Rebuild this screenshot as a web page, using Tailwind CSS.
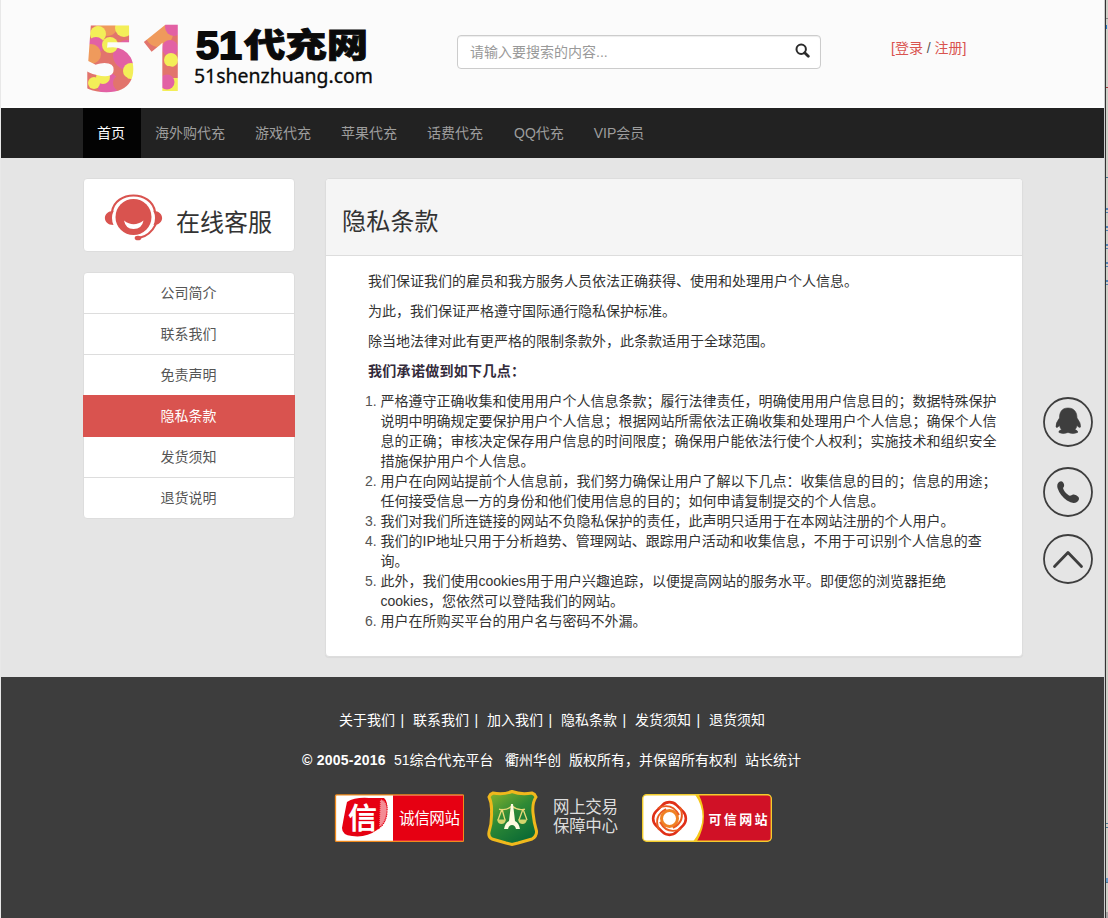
<!DOCTYPE html>
<html lang="zh-CN">
<head>
<meta charset="utf-8">
<title>隐私条款 - 51代充网</title>
<script src="https://cdn.jsdelivr.net/npm/@tailwindcss/browser@4"></script>
</head>
<body class="flex h-[918px] w-[1108px] overflow-hidden bg-[#d0d0c8] font-['Liberation_Sans','Noto_Sans_CJK_SC',sans-serif] text-sm leading-5 text-[#333]">
<div class="flex h-[918px] w-[1104px] flex-col border-l border-[#e8e8e8] bg-[#e5e5e5]">

  <header class="flex h-[108px] shrink-0 border-b-2 border-[#fefefe] bg-[#fbfbfb]">
    <svg class="ml-[74px] h-[106px] w-[310px] shrink-0 overflow-visible" viewBox="75 0 310 106">
      <defs>
        <pattern id="dots" x="75" y="0" width="310" height="110" patternUnits="userSpaceOnUse" viewBox="75 0 310 110">
          <rect x="75" y="0" width="310" height="110" fill="#e2746c"/>
          <circle cx="107" cy="25" r="11" fill="#ef9a5c"/>
          <circle cx="124" cy="28" r="9" fill="#f3ee58"/>
          <circle cx="98" cy="34" r="8" fill="#f3ee58"/>
          <circle cx="96" cy="45" r="8" fill="#e261a4"/>
          <circle cx="91" cy="54" r="10" fill="#ef9a5c"/>
          <circle cx="128" cy="55" r="15" fill="#e261a4"/>
          <circle cx="110" cy="45" r="8" fill="#f3ee58"/>
          <circle cx="131" cy="71" r="8" fill="#f3ee58"/>
          <circle cx="108" cy="84" r="11" fill="#e261a4"/>
          <circle cx="103" cy="77" r="7" fill="#f3ee58"/>
          <circle cx="94" cy="83" r="6" fill="#f3ee58"/>
          <circle cx="121" cy="83" r="8" fill="#e2746c"/>
          <circle cx="159" cy="33" r="14" fill="#ef9a5c"/>
          <circle cx="174" cy="27" r="9" fill="#e261a4"/>
          <circle cx="170" cy="48" r="8" fill="#e261a4"/>
          <circle cx="171" cy="60" r="7" fill="#f3ee58"/>
          <circle cx="169" cy="72" r="6" fill="#e2746c"/>
          <rect x="160" y="78" width="22" height="20" fill="#f3ee58"/>
          <circle cx="167" cy="82" r="7.500" fill="#e261a4"/>
        </pattern>
      </defs>
      <text x="84.500" y="90" font-family="Open Sans" font-weight="800" font-size="88" fill="url(#dots)" stroke="url(#dots)" stroke-width="2.500">5</text>
      <text x="140" y="90" font-family="Open Sans" font-weight="700" font-size="89" fill="url(#dots)" stroke="url(#dots)" stroke-width="2">1</text>
      <text x="196" y="58.500" font-family="Liberation Sans" font-weight="700" font-size="38" fill="#0a0a0a" stroke="#0a0a0a" stroke-width="1.800" textLength="46" lengthAdjust="spacingAndGlyphs">51</text>
      <text x="244" y="57" font-family="Noto Sans CJK SC" font-weight="900" font-size="33" fill="#0a0a0a" stroke="#0a0a0a" stroke-width=".8" textLength="124" lengthAdjust="spacingAndGlyphs">代充网</text>
      <text x="194" y="83" font-family="Noto Sans" font-size="20.500" fill="#0a0a0a" stroke="#0a0a0a" stroke-width=".3" textLength="179" lengthAdjust="spacingAndGlyphs">51shenzhuang.com</text>
    </svg>
    <div class="ml-[72px] mt-[35px] flex h-[34px] w-[364px] shrink-0 items-center justify-between rounded border border-[#ccc] bg-white pl-3 pr-[10px] text-[#999] shadow-[inset_0_1px_1px_rgba(0,0,0,0.075)]">
      <span>请输入要搜索的内容...</span>
      <svg class="mb-1 h-[15px] w-[15px]" viewBox="0 0 15 15" fill="none" stroke="#2b2b2b"><circle cx="6.200" cy="6.200" r="4.700" stroke-width="2"/><path d="M9.700 9.700L13.300 13.300" stroke-width="2.800" stroke-linecap="round"/></svg>
    </div>
    <div class="ml-[70px] mt-[38px] whitespace-nowrap text-[#d9534f]">[登录 <span class="text-[#555]">/</span> 注册]</div>
  </header>

  <nav class="flex h-[50px] shrink-0 bg-[#222] pl-[82px] leading-[50px] text-[#9d9d9d]">
    <a class="bg-[#030303] pl-[14px] pr-[16px] text-white">首页</a>
    <a class="pl-[14px] pr-[16px]">海外购代充</a>
    <a class="pl-[14px] pr-[16px]">游戏代充</a>
    <a class="pl-[14px] pr-[16px]">苹果代充</a>
    <a class="pl-[14px] pr-[16px]">话费代充</a>
    <a class="px-[15px]">QQ代充</a>
    <a class="px-[15px]">VIP会员</a>
  </nav>

  <main class="flex h-[519px] shrink-0 pl-[82px] pt-[20px]">
    <aside class="w-[212px] shrink-0">
      <div class="flex h-[74px] rounded border border-[#ddd] bg-white">
        <svg class="ml-[20px] mt-[14px] h-[50px] w-[60px] shrink-0" viewBox="104 193 60 50">
          <circle cx="133.500" cy="217" r="18" fill="#d9534f"/>
          <path d="M112 212C115 190 152 190 155 212" fill="none" stroke="#d9534f" stroke-width="2.200"/>
          <path d="M113.500 211C102 211 102 225 113.500 225Q110.500 218 113.500 211Z" fill="#d9534f"/>
          <path d="M153.500 211C165 211 165 225 153.500 225Q156.500 218 153.500 211Z" fill="#d9534f"/>
          <path d="M156 224Q150 236 139 238" fill="none" stroke="#d9534f" stroke-width="2"/>
          <ellipse cx="138" cy="238" rx="3.300" ry="2.300" fill="#d9534f"/>
          <path d="M124 220.500Q133.500 228 143.500 220.500Q142 229 133.500 229Q125.500 229 124 220.500Z" fill="#fff"/>
        </svg>
        <span class="ml-[12px] mt-[28px] whitespace-nowrap text-2xl leading-8">在线客服</span>
      </div>
      <ul class="mt-[20px] flex flex-col rounded border border-[#ddd] bg-white text-center leading-[40px] text-[#555]">
        <li class="h-[41px] border-b border-[#ddd] pr-px">公司简介</li>
        <li class="h-[41px] border-b border-[#ddd] pr-px">联系我们</li>
        <li class="h-[40px] pr-px">免责声明</li>
        <li class="-mx-px h-[42px] bg-[#d9534f] pr-px leading-[42px] text-white">隐私条款</li>
        <li class="h-[41px] border-b border-[#ddd] pr-px">发货须知</li>
        <li class="h-[40px] pr-px">退货说明</li>
      </ul>
    </aside>

    <section class="ml-[30px] h-[479px] w-[698px] shrink-0 rounded border border-[#ddd] bg-white shadow-[0_1px_1px_rgba(0,0,0,0.05)]">
      <h1 class="h-[77px] rounded-t border-b border-[#ddd] bg-[#f5f5f5] pl-4 pt-[27px] text-2xl leading-8 tracking-[0.2px]">隐私条款</h1>
      <div class="flex flex-col gap-[10px] whitespace-nowrap pl-[42px] pt-[15px]">
        <p>我们保证我们的雇员和我方服务人员依法正确获得、使用和处理用户个人信息。</p>
        <p>为此，我们保证严格遵守国际通行隐私保护标准。</p>
        <p>除当地法律对此有更严格的限制条款外，此条款适用于全球范围。</p>
        <p class="font-bold tracking-[0.3px] text-[#332b3b]">我们承诺做到如下几点：</p>
        <ol class="list-decimal pl-[12.500px] marker:text-[#555]">
          <li>严格遵守正确收集和使用用户个人信息条款；履行法律责任，明确使用用户信息目的；数据特殊保护<br>说明中明确规定要保护用户个人信息；根据网站所需依法正确收集和处理用户个人信息；确保个人信<br>息的正确；审核决定保存用户信息的时间限度；确保用户能依法行使个人权利；实施技术和组织安全<br>措施保护用户个人信息。</li>
          <li>用户在向网站提前个人信息前，我们努力确保让用户了解以下几点：收集信息的目的；信息的用途；<br>任何接受信息一方的身份和他们使用信息的目的；如何申请复制提交的个人信息。</li>
          <li>我们对我们所连链接的网站不负隐私保护的责任，此声明只适用于在本网站注册的个人用户。</li>
          <li>我们的IP地址只用于分析趋势、管理网站、跟踪用户活动和收集信息，不用于可识别个人信息的查<br>询。</li>
          <li>此外，我们使用cookies用于用户兴趣追踪，以便提高网站的服务水平。即便您的浏览器拒绝<br>cookies，您依然可以登陆我们的网站。</li>
          <li>用户在所购买平台的用户名与密码不外漏。</li>
        </ol>
      </div>
    </section>

    <div class="ml-[19px] mt-[218px] flex shrink-0 flex-col text-[#3e3e3e]">
      <svg class="h-[52px] w-[52px]" viewBox="0 0 52 52"><circle cx="26" cy="26" r="24" fill="none" stroke="currentColor" stroke-width="1.800"/><path d="M26 12C19.500 12 17.500 16.500 17.500 22Q13.500 27 14 31Q15 32.500 17.500 29.500Q18 32 19.500 33.500Q16 35 17 36.500Q21 38.500 26 36.500Q31 38.500 35.500 36.500Q36.500 35 33 33.500Q34.500 32 35 29.500Q37.500 32.500 38.500 31Q39 27 35 22C35 16.500 32.500 12 26 12Z" fill="currentColor" stroke="currentColor" stroke-width=".6"/></svg>
      <svg class="mt-[18px] h-[52px] w-[52px]" viewBox="0 0 52 52"><circle cx="26" cy="26" r="24" fill="none" stroke="currentColor" stroke-width="1.800"/><path d="M17 16Q20 14 21.500 17Q23 20 21 22Q22 26 27 29.500Q29 30 31 28.500Q34 28 36.500 31Q38 33.500 35 36Q31 38.500 25 34.500Q18 29.500 15.500 22Q14.500 18 17 16Z" fill="currentColor"/></svg>
      <svg class="mt-[15px] h-[52px] w-[52px]" viewBox="0 0 52 52"><circle cx="26" cy="26" r="24" fill="none" stroke="currentColor" stroke-width="1.800"/><path d="M12.500 33.500L26 19.500L39.500 33.500" fill="none" stroke="currentColor" stroke-width="2.800" stroke-linecap="round" stroke-linejoin="round"/></svg>
    </div>
  </main>

  <footer class="h-[241px] shrink-0 bg-[#3d3d3d] pt-[33px] text-white">
    <div class="flex pl-[338px]"><span class="flex w-[74px] gap-[5.500px]">关于我们<i class="not-italic">|</i></span><span class="flex w-[74px] gap-[5.500px]">联系我们<i class="not-italic">|</i></span><span class="flex w-[74px] gap-[5.500px]">加入我们<i class="not-italic">|</i></span><span class="flex w-[74px] gap-[5.500px]">隐私条款<i class="not-italic">|</i></span><span class="flex w-[74px] gap-[5.500px]">发货须知<i class="not-italic">|</i></span><span>退货须知</span></div>
    <div class="mt-[20px] flex whitespace-nowrap pl-[301px]"><span class="w-[92px] font-bold tracking-[0.25px]">© 2005-2016</span><span class="w-[111px]">51综合代充平台</span><span class="w-[64px]">衢州华创</span><span class="w-[176px]">版权所有，并保留所有权利</span><span>站长统计</span></div>
    <div class="mt-[20px] flex pl-[333px]">
      <svg class="mt-[4px] h-[49px] w-[130px]" viewBox="334 794 130 49">
        <rect x="335.500" y="794.900" width="128" height="46.500" rx="1" fill="#fff" stroke="#f08a1c" stroke-width="1.300"/>
        <rect x="393" y="795.500" width="70" height="45.300" fill="#e60012"/>
        <path d="M347 802Q355 797 369 798L384 798Q388 801 387 812Q387 823 377 830Q366 838 352 836Q342 835 342 828Q345 811 347 802Z" fill="#e60012"/>
        <path d="M380 799Q388 800 387 812Q386 823 379 828Z" fill="#fff" fill-opacity=".55" stroke="#e60012" stroke-dasharray="1 1" stroke-width="1.500"/>
        <text x="348" y="829" font-family="Noto Sans CJK SC" font-weight="700" font-size="29" fill="#fff">信</text>
        <text x="399" y="824" font-family="Noto Sans CJK SC" font-size="15.500" fill="#fff" textLength="61">诚信网站</text>
      </svg>
      <svg class="ml-[23px] h-[56px] w-[132px]" viewBox="487 790 132 56">
        <defs><linearGradient id="shield" x1="0" y1="0" x2=".6" y2="1"><stop offset="0" stop-color="#8db52b"/><stop offset=".5" stop-color="#2f8a35"/><stop offset="1" stop-color="#0c6b35"/></linearGradient></defs>
        <path d="M493 793Q503 795 512 791.500Q521 795 532 793Q535 794 536 797Q532 803 533 813Q534 823 536.500 831Q537 836 532 839L518 843L512 844.500L506 843L492 839Q488 837 489 832Q492 823 491.500 812Q492 803 489 797Q490 794 493 793Z" fill="url(#shield)" stroke="#f0b81c" stroke-width="3"/>
        <g fill="none" stroke="#ead978" stroke-width="1.300"><path d="M499 809Q506 811 512 806Q518 811 525 809M502 809L498 820M502 809L505 820M523 809L519 820M523 809L527 820"/></g>
        <path d="M497 819.500H506Q505 824 501.500 824Q498 824 497 819.500ZM518 819.500H527Q526 824 522.500 824Q519 824 518 819.500Z" fill="#d4d46c"/>
        <path d="M511 804H513L515 821Q519 823 520 829H516Q515 825 512 825Q509 825 508 829H504Q505 823 509 821Z" fill="#fffbe0"/>
        <text x="553" y="813" font-family="Noto Sans CJK SC" font-size="16.500" fill="#ddd" textLength="65">网上交易</text>
        <text x="553" y="832" font-family="Noto Sans CJK SC" font-size="16.500" fill="#ddd" textLength="65">保障中心</text>
      </svg>
      <svg class="ml-[22px] mt-[3px] h-[50px] w-[132px]" viewBox="641 793 132 50">
        <defs><clipPath id="badge"><rect x="642.700" y="794.700" width="128.600" height="46.600" rx="4"/></clipPath></defs>
        <g clip-path="url(#badge)"><rect x="641" y="793" width="132" height="50" fill="#fff"/><path d="M694 793Q712 818 692 843H773V793Z" fill="#f5c71a"/><path d="M698 793Q711 818 696 843H773V793Z" fill="#d01126"/></g>
        <rect x="642.700" y="794.700" width="128.600" height="46.600" rx="4" fill="none" stroke="#f2cc2c" stroke-width="1.400"/>
        <g fill="none">
          <rect x="655" y="804" width="29" height="29" rx="10" transform="rotate(45 669.500 818.500)" stroke="#e03018" stroke-width="2.600"/>
          <circle cx="669.500" cy="818.500" r="8" stroke="#f08224" stroke-width="3"/>
          <g stroke="#ea5a20" stroke-width="1.900"><path id="petal" d="M658 808Q672 802 679 815"/><path d="M658 808Q672 802 679 815" transform="rotate(90 669.500 818.500)"/><path d="M658 808Q672 802 679 815" transform="rotate(180 669.500 818.500)"/><path d="M658 808Q672 802 679 815" transform="rotate(270 669.500 818.500)"/></g>
        </g>
        <text x="708.500" y="823.500" font-family="Noto Sans CJK SC" font-weight="700" font-size="13" fill="#fff" textLength="59">可信网站</text>
      </svg>
    </div>
  </footer>
</div>
<div class="w-px bg-[#ccc]"></div>
<div class="w-px bg-[#333]"></div>
<div class="flex flex-1 flex-col">
  <div class="mt-[18px] h-px bg-[#888]"></div>
  <div class="mt-[6px] h-[4px] w-px bg-[#2878c8]"></div>
  <div class="mt-[58px] h-px bg-[#a04040]"></div>
  <div class="mt-[89px] h-px bg-[#4a7890]"></div>
  <div class="mt-[30px] flex flex-col gap-[13px]">
    <i class="h-[5px] border-t-2 border-b border-[#5585b5]"></i><i class="h-[5px] border-t-2 border-b border-[#5585b5]"></i><i class="h-[5px] border-t-2 border-b border-[#5585b5]"></i><i class="h-[5px] border-t-2 border-b border-[#5585b5]"></i><i class="h-[5px] border-t-2 border-b border-[#5585b5]"></i>
  </div>
  <div class="mt-[538px] h-[5px] border-y border-[#4a7890]"></div>
  <div class="mt-[50px] h-[5px] border-b border-[#4a7890] bg-[#6a9cc8]"></div>
  <div class="mt-[29px] flex-1 bg-[#a8a4a4]"></div>
</div>
</body>
</html>
